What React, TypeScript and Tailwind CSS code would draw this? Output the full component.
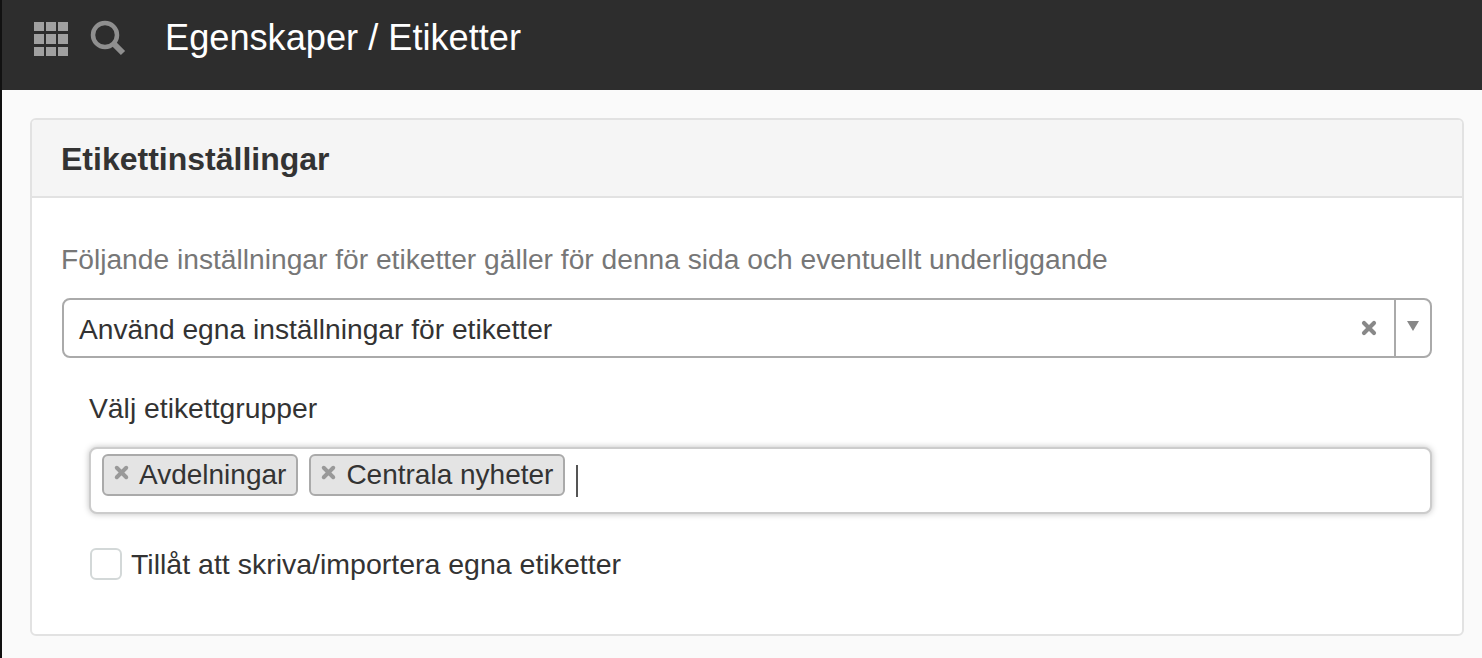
import { X } from "lucide-react";

function Tag({ label }: { label: string }) {
    return (
        <div className="flex items-center h-[42px] pl-[8px] pr-[10px] bg-[#e4e4e4] border-2 border-[#aaaaaa] rounded-[6px]">
            <X size={19} strokeWidth={5} className="text-[#999999] mr-[8px] -mt-[6px]" />
            <span className="text-[28px] text-[#333333] leading-none">{label}</span>
        </div>
    );
}

export default function App() {
    return (
        <div className="w-[1482px] h-[658px] overflow-hidden bg-[#fafafa] border-l-2 border-[#111111] font-['Liberation_Sans',Arial,sans-serif]">
            <header className="h-[90px] bg-[#2d2d2d] flex items-center pl-[32px] pb-[14px]">
                <svg className="mt-[1px]" width="34" height="34" viewBox="0 0 34 34" fill="#a0a0a0">
                    <rect x="0" y="0" width="10" height="9" />
                    <rect x="12" y="0" width="10" height="9" />
                    <rect x="24" y="0" width="10" height="9" />
                    <rect x="0" y="12" width="10" height="10" />
                    <rect x="12" y="12" width="10" height="10" />
                    <rect x="24" y="12" width="10" height="10" />
                    <rect x="0" y="25" width="10" height="9" />
                    <rect x="12" y="25" width="10" height="9" />
                    <rect x="24" y="25" width="10" height="9" />
                </svg>
                <svg className="ml-[22px]" width="36" height="36" viewBox="0 0 36 36" fill="none" stroke="#8f8f8f">
                    <circle cx="15" cy="15" r="12" strokeWidth="4.5" />
                    <path d="M23.5 23.5 L33 33" strokeWidth="6" />
                </svg>
                <h1 className="ml-[39px] text-[36.2px] text-white leading-none">Egenskaper / Etiketter</h1>
            </header>

            <main className="pt-[28px] pl-[28px] w-[1462px]">
                <section className="h-[518px] bg-white border-2 border-[#e2e2e2] rounded-[6px] overflow-hidden">
                    <div className="h-[78px] bg-[#f5f5f5] border-b-2 border-[#e2e2e2] flex items-center pl-[29px]">
                        <h2 className="text-[32px] font-bold text-[#333333] leading-none mt-[2px]">Etikettinställingar</h2>
                    </div>
                    <div className="pl-[30px] pr-[30px] pt-[46px]">
                        <p className="-ml-[1px] text-[28.2px] text-[#777777] leading-[30px]">
                            Följande inställningar för etiketter gäller för denna sida och eventuellt underliggande
                        </p>
                        <div className="mt-[24px] h-[60px] border-2 border-[#aaaaaa] rounded-[8px] flex items-center">
                            <span className="flex-1 pl-[15px] pt-[3px] text-[28.2px] text-[#333333]">Använd egna inställningar för etiketter</span>
                            <X size={20} strokeWidth={5} className="text-[#888888] mr-[15px]" />
                            <div className="w-[36px] h-full border-l-2 border-[#aaaaaa] flex items-center justify-center">
                                <div className="w-0 h-0 border-x-[6px] border-x-transparent border-t-[10px] border-t-[#888888] -mt-[4px]" />
                            </div>
                        </div>
                        <div className="pl-[27px]">
                            <label className="block mt-[35px] text-[28.3px] text-[#333333] leading-[30px]">Välj etikettgrupper</label>
                            <div className="mt-[24px] h-[67px] bg-white border-2 border-[#cccccc] rounded-[8px] shadow-[0_0_6px_rgba(0,0,0,0.25)] flex items-start gap-[11px] pl-[11px] pt-[5px]">
                                <Tag label="Avdelningar" />
                                <Tag label="Centrala nyheter" />
                                <div className="w-[2px] h-[32px] bg-[#555555] mt-[11px]" />
                            </div>
                            <div className="mt-[34px] ml-[1px] flex items-center gap-[9px]">
                                <div className="w-[32px] h-[32px] bg-white border-2 border-[#d3d8d8] rounded-[6px]" />
                                <span className="text-[28.5px] text-[#333333] leading-none">Tillåt att skriva/importera egna etiketter</span>
                            </div>
                        </div>
                    </div>
                </section>
            </main>
        </div>
    );
}
